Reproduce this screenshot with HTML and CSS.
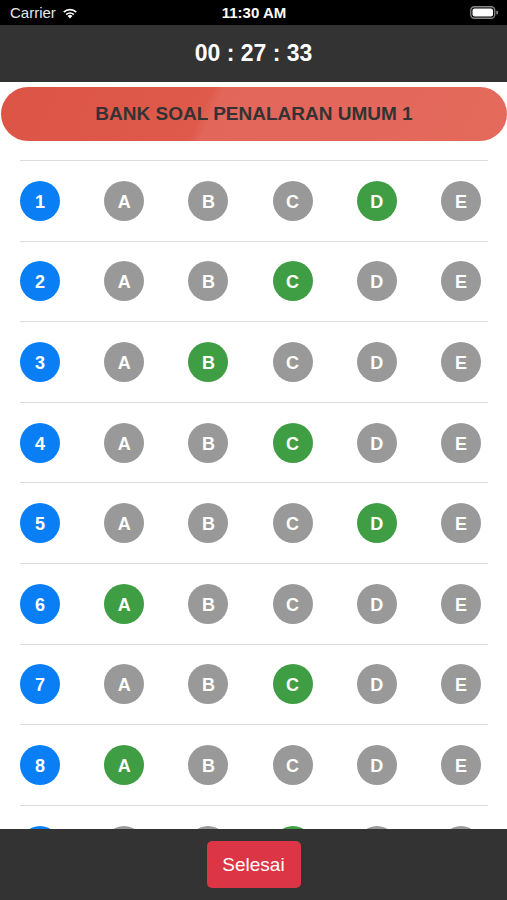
FILE: index.html
```html
<!DOCTYPE html>
<html lang="id">
<head>
    <meta charset="UTF-8">
    <title>Bank Soal</title>
    <link rel="stylesheet" href="styles.css">
</head>
<body>
    <div class="screen">
        <div class="status-bar">
            <div class="carrier">
                Carrier
                <svg class="wifi" width="16" height="12" viewBox="0 0 16 12">
                    <path d="M8 11.5 L5.6 9 A3.4 3.4 0 0 1 10.4 9 Z" fill="#fff"/>
                    <path d="M3.6 7 A6.2 6.2 0 0 1 12.4 7 L11.2 8.2 A4.5 4.5 0 0 0 4.8 8.2 Z" fill="#fff"/>
                    <path d="M1.2 4.6 A9.6 9.6 0 0 1 14.8 4.6 L13.6 5.8 A7.9 7.9 0 0 0 2.4 5.8 Z" fill="#fff"/>
                </svg>
            </div>
            <div class="clock">11:30 AM</div>
            <div class="battery">
                <svg width="28" height="13" viewBox="0 0 28 13">
                    <rect x="0.75" y="0.75" width="24" height="11.5" rx="3.5" fill="none" stroke="#888" stroke-width="1.3"/>
                    <rect x="2.5" y="2.5" width="20.5" height="8" rx="2" fill="#fff"/>
                    <path d="M26.3 4.5 A2 2 0 0 1 26.3 8.5 Z" fill="#888"/>
                </svg>
            </div>
        </div>

        <div class="timer-bar">00 : 27 : 33</div>

        <div class="content">
            <div class="title-pill">BANK SOAL PENALARAN UMUM 1</div>
            <div class="answer-list" id="answerList"></div>
        </div>

        <div class="footer">
            <button class="btn-finish">Selesai</button>
        </div>
    </div>

    <script>
        const answers = ['D', 'C', 'B', 'C', 'D', 'A', 'C', 'A', 'C'];
        const options = ['A', 'B', 'C', 'D', 'E'];
        const list = document.getElementById('answerList');

        answers.forEach(function(ans, i) {
            const row = document.createElement('div');
            row.className = 'answer-row';
            let html = '<span class="circle number">' + (i + 1) + '</span>';
            options.forEach(function(opt) {
                const cls = opt === ans ? 'circle option chosen' : 'circle option';
                html += '<span class="' + cls + '">' + opt + '</span>';
            });
            row.innerHTML = html;
            list.appendChild(row);
        });
    </script>
</body>
</html>
```

FILE: styles.css
```css
* {
    box-sizing: border-box;
}
body {
    margin: 0;
    font-family: 'Liberation Sans', Arial, sans-serif;
    background: #ffffff;
}
.screen {
    width: 507px;
    height: 900px;
    display: flex;
    flex-direction: column;
    overflow: hidden;
}
.status-bar {
    height: 25px;
    background: #000000;
    color: #e6e6e6;
    font-size: 15px;
    display: flex;
    align-items: center;
    justify-content: space-between;
    padding: 0 9px 0 10px;
}
.carrier {
    display: flex;
    align-items: center;
    gap: 6px;
    width: 100px;
}
.clock {
    color: #ffffff;
    font-weight: bold;
    font-size: 15px;
}
.battery {
    width: 100px;
    display: flex;
    justify-content: flex-end;
}
.timer-bar {
    height: 57px;
    background: #333333;
    color: #ffffff;
    font-size: 23px;
    font-weight: bold;
    display: flex;
    align-items: center;
    justify-content: center;
}
.content {
    flex: 1;
    overflow: hidden;
    background: #ffffff;
}
.title-pill {
    margin: 5px 0 0 1px;
    height: 54px;
    border-radius: 27px;
    background: linear-gradient(115deg, #dc5446 0%, #df5a4b 40%, #e2665a 42%, #e46a5c 100%);
    color: #333333;
    font-size: 19px;
    font-weight: bold;
    display: flex;
    align-items: center;
    justify-content: center;
}
.answer-list {
    margin: 19px 19px 0 20px;
}
.answer-row {
    height: 80.6px;
    border-top: 1.5px solid #dcdcdc;
    display: flex;
    align-items: center;
    justify-content: space-between;
    padding-right: 7px;
}
.circle {
    width: 40px;
    height: 40px;
    border-radius: 50%;
    color: #ffffff;
    font-weight: bold;
    font-size: 18px;
    display: flex;
    align-items: center;
    justify-content: center;
    padding-top: 3px;
}
.number {
    background: #0a7ff5;
}
.option {
    background: #999999;
}
.option.chosen {
    background: #3f9e43;
}
.footer {
    height: 71px;
    background: #333333;
    display: flex;
    justify-content: center;
    padding-top: 12px;
}
.btn-finish {
    width: 94px;
    height: 47px;
    background: #dc3545;
    border: none;
    border-radius: 5px;
    color: #ffffff;
    font-family: 'Liberation Sans', Arial, sans-serif;
    font-size: 19px;
    padding: 0;
}
```
